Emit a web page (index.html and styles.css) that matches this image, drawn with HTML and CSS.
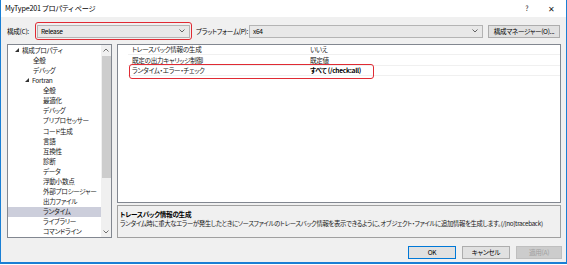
FILE: index.html
```html
<!DOCTYPE html>
<html lang="ja">
<head>
<meta charset="utf-8">
<title>MyType201 プロパティ ページ</title>
<link rel="stylesheet" href="styles.css">
</head>
<body>
<div class="window">
  <div class="titlebar">
    <span class="title">MyType201 プロパティ ページ</span>
    <span class="tb-btn">?</span>
    <span class="tb-btn tb-close">✕</span>
  </div>
  <div class="content">
    <div class="toprow">
      <span class="lbl lbl-config">構成(C):</span>
      <div class="hl-combo">
        <div class="combo">
          <span class="combo-text">Release</span>
          <svg class="chev" width="6" height="4" viewBox="0 0 6 4"><path d="M0.5 0.5 L3 3 L5.5 0.5" fill="none" stroke="#555" stroke-width="0.9"/></svg>
        </div>
      </div>
      <span class="lbl lbl-plat">プラットフォーム(P):</span>
      <div class="combo combo-plat">
        <span class="combo-text">x64</span>
        <svg class="chev" width="6" height="4" viewBox="0 0 6 4"><path d="M0.5 0.5 L3 3 L5.5 0.5" fill="none" stroke="#555" stroke-width="0.9"/></svg>
      </div>
      <div class="btn btn-mgr">構成マネージャー(O)...</div>
    </div>

    <div class="main">
      <div class="tree">
        <ul class="tree-list">
          <li class="item l0"><svg class="tri" width="4" height="4" viewBox="0 0 4 4"><polygon points="4,0 4,4 0,4" fill="#333"/></svg>構成プロパティ</li>
          <li class="item l1">全般</li>
          <li class="item l1">デバッグ</li>
          <li class="item l1b"><svg class="tri" width="4" height="4" viewBox="0 0 4 4"><polygon points="4,0 4,4 0,4" fill="#333"/></svg>Fortran</li>
          <li class="item l2">全般</li>
          <li class="item l2">最適化</li>
          <li class="item l2">デバッグ</li>
          <li class="item l2">プリプロセッサー</li>
          <li class="item l2">コード生成</li>
          <li class="item l2">言語</li>
          <li class="item l2">互換性</li>
          <li class="item l2">診断</li>
          <li class="item l2">データ</li>
          <li class="item l2">浮動小数点</li>
          <li class="item l2">外部プロシージャー</li>
          <li class="item l2">出力ファイル</li>
          <li class="item l2 selected">ランタイム</li>
          <li class="item l2">ライブラリー</li>
          <li class="item l2">コマンドライン</li>
        </ul>
        <div class="scrollbar">
          <div class="sb-arrow"><svg width="6" height="4" viewBox="0 0 6 4"><path d="M0.5 3.5 L3 1 L5.5 3.5" fill="none" stroke="#606060" stroke-width="0.9"/></svg></div>
          <div class="sb-track"><div class="sb-thumb"></div></div>
          <div class="sb-arrow"><svg width="6" height="4" viewBox="0 0 6 4"><path d="M0.5 0.5 L3 3 L5.5 0.5" fill="none" stroke="#606060" stroke-width="0.9"/></svg></div>
        </div>
      </div>

      <div class="right">
        <div class="grid">
          <div class="margin"></div>
          <div class="rows">
            <div class="row"><span class="name">トレースバック情報の生成</span><span class="val">いいえ</span></div>
            <div class="row"><span class="name">既定の出力キャリッジ制御</span><span class="val">既定値</span></div>
            <div class="row row-hl"><span class="name">ランタイム・エラー・チェック</span><span class="val bold">すべて (/check:all)</span><span class="hl-ring"></span></div>
          </div>
        </div>
        <div class="desc">
          <div class="desc-title">トレースバック情報の生成</div>
          <div class="desc-text">ランタイム時に重大なエラーが発生したときにソースファイルのトレースバック情報を表示できるように、オブジェクト・ファイルに追加情報を生成します。(/[no]traceback)</div>
        </div>
      </div>
    </div>

    <div class="buttons">
      <div class="btn btn-ok">OK</div>
      <div class="btn btn-cancel">キャンセル</div>
      <div class="btn btn-apply">適用(A)</div>
    </div>
  </div>
</div>
</body>
</html>
```

FILE: styles.css
```css
* { box-sizing: border-box; margin: 0; padding: 0; }
html, body { width: 567px; height: 265px; background: #ffffff; overflow: hidden; }
body {
  font-family: "Noto Sans CJK JP", "Noto Sans", sans-serif;
  font-size: 6.6px;
  letter-spacing: -0.3px;
  font-feature-settings: "palt";
  color: #000;
  line-height: 1;
}
.window {
  width: 567px;
  height: 264px;
  border: 1px solid #1a7fd4;
  border-top: none;
  border-bottom-width: 2px;
  background: #f0f0f0;
  display: flex;
  flex-direction: column;
}
.titlebar {
  height: 17px;
  background: #ffffff;
  display: flex;
  align-items: center;
  padding-left: 4px;
  padding-right: 3px;
}
.title { flex: 1; font-size: 7.2px; color: #000; letter-spacing: -0.2px; }
.tb-btn { width: 24px; text-align: center; font-size: 7px; color: #222; letter-spacing: 0; }
.tb-close { font-size: 7.5px; }

.content {
  flex: 1;
  padding: 5px 5px 0 6px;
  display: flex;
  flex-direction: column;
}

/* top row */
.toprow { height: 18px; display: flex; align-items: center; }
.lbl { white-space: nowrap; }
.lbl-config { width: 28px; }
.lbl-plat { width: 53px; margin-left: 4px; }
.hl-combo {
  width: 157px;
  height: 18px;
  border: 1.5px solid #e02a33;
  border-radius: 3px;
  padding: 1.5px 1px;
  display: flex;
}
.combo {
  flex: 1;
  height: 13px;
  background: #e8e8e8;
  border: 1px solid #b4b4b4;
  display: flex;
  align-items: center;
  padding: 0 4px 0 3px;
}
.combo-text { flex: 1; }
.combo-plat { flex: none; width: 234px; }
.chev { display: block; }
.btn {
  height: 13px;
  background: #e1e1e1;
  border: 1px solid #adadad;
  display: flex;
  align-items: center;
  justify-content: center;
  white-space: nowrap;
}
.btn-mgr { width: 72px; margin-left: 5px; }

/* main */
.main {
  display: flex;
  gap: 5px;
  height: 194px;
  margin-top: 4px;
}
.tree {
  width: 105px;
  background: #ffffff;
  border: 1px solid #828790;
  display: flex;
}
.tree-list { list-style: none; flex: 1; }
.item {
  height: 10.1px;
  display: flex;
  align-items: center;
  white-space: nowrap;
  color: #1a1a1a;
}
.tri { display: block; margin-right: 3px; }
.l0 { padding-left: 7px; }
.l1 { padding-left: 25px; }
.l1b { padding-left: 17px; }
.l2 { padding-left: 35px; }
.selected { background: #cccedb; }

.scrollbar {
  width: 10px;
  background: #f0f0f0;
  display: flex;
  flex-direction: column;
}
.sb-arrow { height: 10px; display: flex; align-items: center; justify-content: center; }
.sb-track { flex: 1; padding-top: 1px; }
.sb-thumb { height: 122px; margin: 0 0.5px; background: #cdcdcd; }

.right { flex: 1; display: flex; flex-direction: column; gap: 2px; }
.grid {
  height: 159px;
  background: #ffffff;
  border: 1px solid #828790;
  display: flex;
}
.margin { width: 10px; }
.rows { flex: 1; }
.row {
  position: relative;
  height: 10.4px;
  display: flex;
  align-items: center;
  border-bottom: 1px solid #f0f0f0;
  white-space: nowrap;
}
.name { width: 179px; padding-left: 4px; color: #1a1a1a; }
.val { padding-left: 3px; color: #1a1a1a; }
.bold { font-weight: bold; color: #000; }
.hl-ring {
  position: absolute;
  left: 1px;
  top: -2px;
  width: 245px;
  height: 15px;
  border: 1.5px solid #e02a33;
  border-radius: 3px;
}

.desc {
  flex: 1;
  background: #f0f0f0;
  border: 1px solid #a0a0a0;
  padding: 3px 2px;
}
.desc-title { font-weight: bold; height: 10px; line-height: 10px; }
.desc-text { white-space: nowrap; height: 10px; line-height: 10px; font-size: 6.4px; letter-spacing: -0.38px; color: #1a1a1a; }

.buttons {
  display: flex;
  justify-content: flex-end;
  gap: 6px;
  margin-top: 8px;
  margin-right: -1px;
}
.btn-ok { width: 48px; border-color: #0078d7; }
.btn-cancel { width: 48px; }
.btn-apply { width: 46px; background: #cccccc; border-color: #bfbfbf; color: #a0a0a0; }
```
